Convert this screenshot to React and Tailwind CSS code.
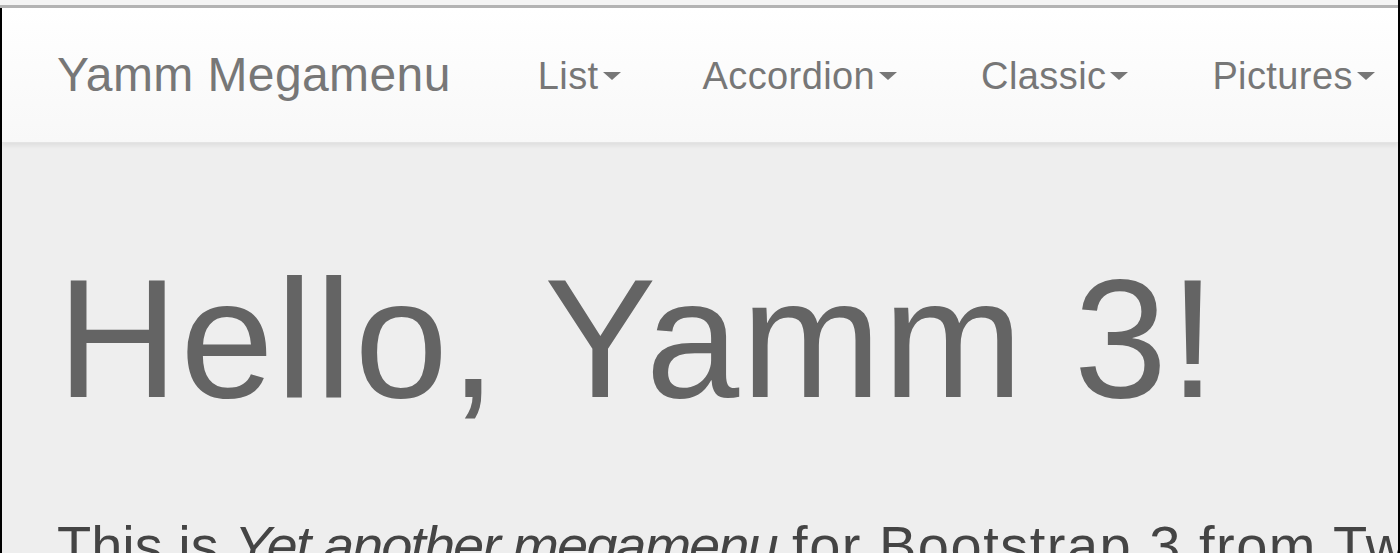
const menus = ['List', 'Accordion', 'Classic', 'Pictures'];

function Caret() {
  return (
    <span className="ml-[4px] inline-block h-0 w-0 border-x-[9px] border-t-[8px] border-x-transparent border-t-[#777] align-middle" />
  );
}

export default function App() {
  return (
    <div className="flex h-[553px] w-[1400px] flex-col overflow-hidden bg-[#eeeeee] font-['Liberation_Sans',Arial,sans-serif]">
      <div className="h-[5px] shrink-0 border-r-2 border-black bg-[#f4f4f4]" />
      <div className="h-[3px] shrink-0 border-r-2 border-black bg-[#b3b3b3]" />
      <div className="flex flex-1 flex-col overflow-hidden border-x-2 border-black">
        <nav className="flex h-[135px] shrink-0 items-start border-b border-[#e4e4e4] bg-gradient-to-b from-white to-[#f8f8f8] pl-[55px] shadow-[0_3px_4px_rgba(0,0,0,0.06)]">
          <span className="mt-[43px] shrink-0 whitespace-nowrap pr-[46px] text-[48px] leading-none tracking-[0.4px] text-[#777]">
            Yamm Megamenu
          </span>
          <ul className="mt-[49px] flex shrink-0">
            {menus.map((m, i) => (
              <li
                key={m}
                className={`flex shrink-0 items-center whitespace-nowrap px-[41px] text-[38px] leading-none tracking-[0.4px] text-[#777] ${i > 1 ? 'pl-[43px]' : ''}`}
              >
                {m}
                <Caret />
              </li>
            ))}
          </ul>
        </nav>
        <main className="pl-[55px]">
          <h1 className="mt-[112px] whitespace-nowrap text-[168px] leading-none tracking-[2px] text-[#646464]">Hello, Yamm 3!</h1>
          <p className="mt-[95px] whitespace-nowrap text-[56px] leading-none text-[#444]">
            This is <em className="tracking-[-2px]">Yet another megamenu</em>{' '}
            <span className="tracking-[1.5px]">for Bootstrap 3 from Twitter</span>
          </p>
        </main>
      </div>
    </div>
  );
}
